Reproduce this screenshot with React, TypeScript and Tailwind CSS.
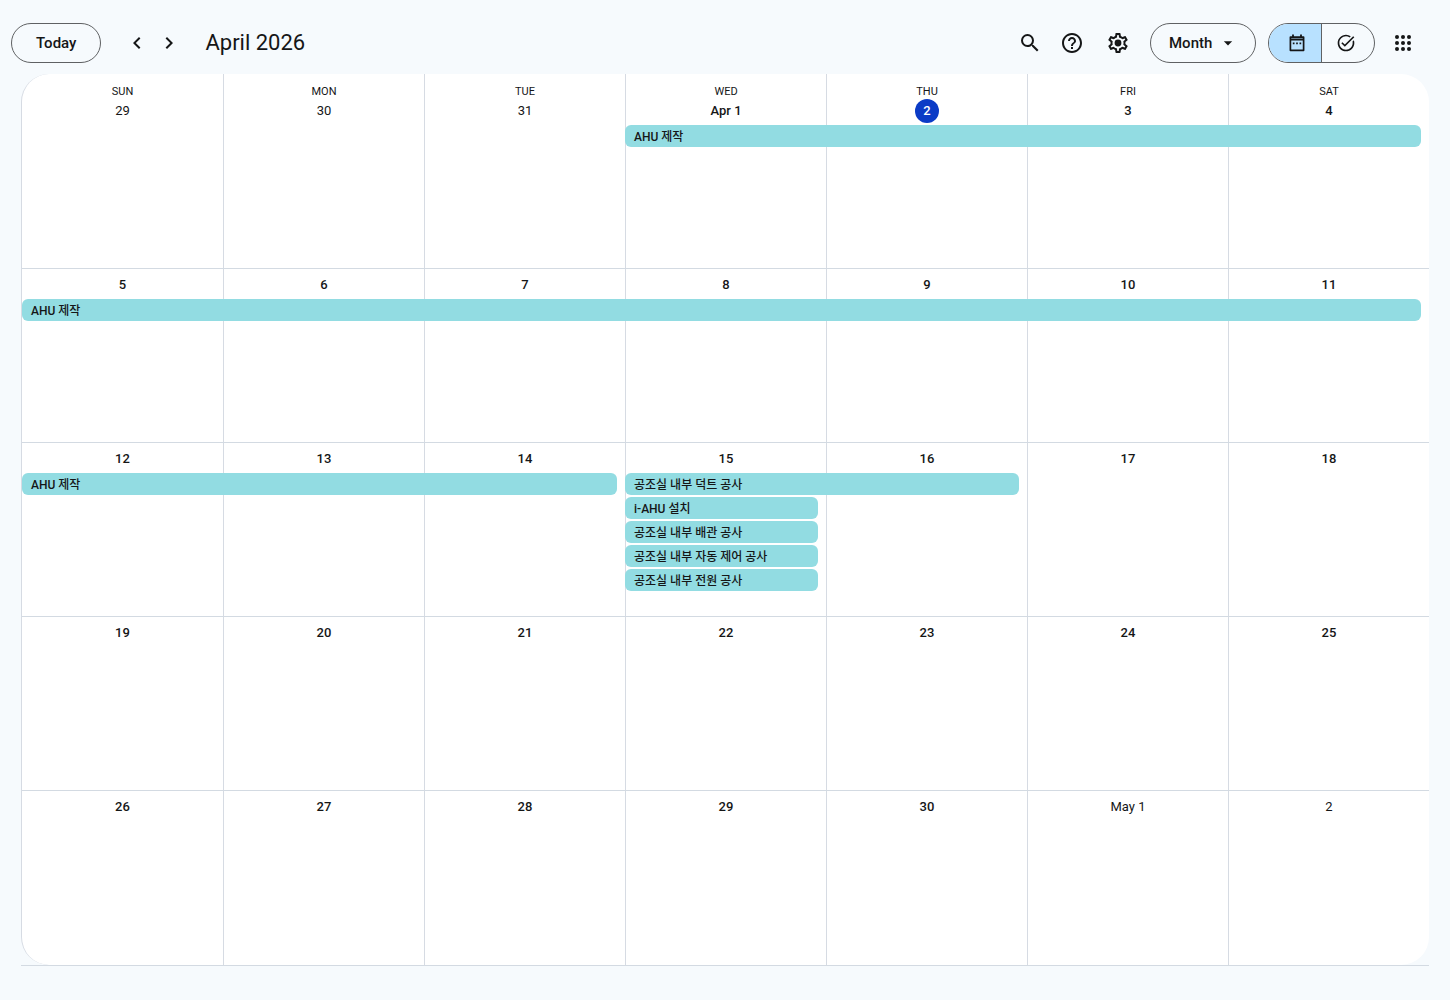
import { useState } from 'react'
import {
  MdArrowDropDown,
  MdChevronLeft,
  MdChevronRight,
  MdHelpOutline,
  MdSearch,
  MdTaskAlt,
} from 'react-icons/md'

type CalendarEvent = {
  title: string
  place: string
}

type Week = {
  days: string[]
  events: CalendarEvent[]
}

const WEEKDAYS = ['SUN', 'MON', 'TUE', 'WED', 'THU', 'FRI', 'SAT']

const COLUMNS = [
  'col-start-1',
  'col-start-2',
  'col-start-3',
  'col-start-4',
  'col-start-5',
  'col-start-6',
  'col-start-7',
]

const WEEKS: Week[] = [
  {
    days: ['29', '30', '31', 'Apr 1', '2', '3', '4'],
    events: [{ title: 'AHU 제작', place: 'col-start-4 col-end-8 row-start-2' }],
  },
  {
    days: ['5', '6', '7', '8', '9', '10', '11'],
    events: [{ title: 'AHU 제작', place: 'col-start-1 col-end-8 row-start-2' }],
  },
  {
    days: ['12', '13', '14', '15', '16', '17', '18'],
    events: [
      { title: 'AHU 제작', place: 'col-start-1 col-end-4 row-start-2' },
      { title: '공조실 내부 덕트 공사', place: 'col-start-4 col-end-6 row-start-2' },
      { title: 'i-AHU 설치', place: 'col-start-4 row-start-3' },
      { title: '공조실 내부 배관 공사', place: 'col-start-4 row-start-4' },
      { title: '공조실 내부 자동 제어 공사', place: 'col-start-4 row-start-5' },
      { title: '공조실 내부 전원 공사', place: 'col-start-4 row-start-6' },
    ],
  },
  { days: ['19', '20', '21', '22', '23', '24', '25'], events: [] },
  { days: ['26', '27', '28', '29', '30', 'May 1', '2'], events: [] },
]

// days before April in the first row and after it in the last one
function isOutside(row: number, column: number) {
  return (row === 0 && column < 3) || (row === WEEKS.length - 1 && column > 4)
}

function SettingsIcon() {
  return (
    <svg viewBox="0 0 24 24" className="size-6" fill="currentColor" aria-hidden="true">
      <path d="M19.43 12.98c.04-.32.07-.64.07-.98 0-.34-.03-.66-.07-.98l2.11-1.65c.19-.15.24-.42.12-.64l-2-3.46a.5.5 0 0 0-.61-.22l-2.49 1c-.52-.4-1.08-.73-1.69-.98l-.38-2.65A.488.488 0 0 0 14 2h-4c-.25 0-.46.18-.49.42l-.38 2.65c-.61.25-1.17.59-1.69.98l-2.49-1a.5.5 0 0 0-.61.22l-2 3.46c-.13.22-.07.49.12.64l2.11 1.65c-.04.32-.07.65-.07.98 0 .33.03.66.07.98l-2.11 1.65c-.19.15-.24.42-.12.64l2 3.46c.12.22.38.3.61.22l2.49-1c.52.4 1.08.73 1.69.98l.38 2.65c.03.24.24.42.49.42h4c.25 0 .46-.18.49-.42l.38-2.65c.61-.25 1.17-.59 1.69-.98l2.49 1c.23.09.49 0 .61-.22l2-3.46c.12-.22.07-.49-.12-.64l-2.11-1.65zm-1.98-1.71c.04.31.05.52.05.73s-.02.43-.05.73l-.14 1.13.89.7 1.08.84-.7 1.21-1.27-.51-1.04-.42-.9.68c-.43.32-.84.56-1.25.73l-1.06.43-.16 1.13-.2 1.35h-1.4l-.19-1.35-.16-1.13-1.06-.43c-.43-.18-.83-.41-1.23-.71l-.91-.7-1.06.43-1.27.51-.7-1.21 1.08-.84.89-.7-.14-1.13c-.03-.31-.05-.54-.05-.74s.02-.43.05-.73l.14-1.13-.89-.7-1.08-.84.7-1.21 1.27.51 1.04.42.9-.68c.43-.32.84-.56 1.25-.73l1.06-.43.16-1.13.2-1.35h1.39l.19 1.35.16 1.13 1.06.43c.43.18.83.41 1.23.71l.91.7 1.06-.43 1.27-.51.7 1.21-1.07.85-.89.7.14 1.13z" />
      <circle cx="12" cy="12" r="3.4" />
    </svg>
  )
}

function CalendarIcon() {
  return (
    <svg viewBox="0 0 20 20" className="size-5" fill="none" stroke="currentColor" aria-hidden="true">
      <path d="M3.4 4.2h13.2v13.1H3.4z" strokeWidth="1.7" strokeLinejoin="round" />
      <path d="M3.4 6.4h13.2" strokeWidth="2" />
      <path d="M6 1.6v2.6M14 1.6v2.6" strokeWidth="1.8" />
      <path d="M5.8 10.3h1.7M9.15 10.3h1.7M12.5 10.3h1.7" strokeWidth="1.7" />
    </svg>
  )
}

function AppsIcon() {
  return (
    <svg viewBox="0 0 24 24" className="size-6" fill="currentColor" aria-hidden="true">
      {[6, 12, 18].map((y) => [6, 12, 18].map((x) => <circle key={`${x}-${y}`} cx={x} cy={y} r="2" />))}
    </svg>
  )
}

function IconButton({
  label,
  className = 'size-10',
  children,
}: {
  label: string
  className?: string
  children: React.ReactNode
}) {
  return (
    <button
      aria-label={label}
      className={`flex items-center justify-center rounded-full hover:bg-black/5 ${className}`}
    >
      {children}
    </button>
  )
}

function Toolbar() {
  const [view, setView] = useState('Month')
  const [mode, setMode] = useState('calendar')

  return (
    <header className="flex items-center pt-[23px] pr-[27px] pb-[11px] pl-[11px]">
      <button className="h-10 rounded-full border border-[#5f6163] px-6 text-[15px] font-medium hover:bg-black/5">
        Today
      </button>
      <div className="ml-5 flex">
        <IconButton label="Previous month" className="size-8">
          <MdChevronLeft className="size-6" />
        </IconButton>
        <IconButton label="Next month" className="size-8">
          <MdChevronRight className="size-6" />
        </IconButton>
      </div>
      <h1 className="ml-5 text-[22px] leading-7">April 2026</h1>

      <div className="ml-auto flex items-center">
        <IconButton label="Search">
          <MdSearch className="size-6" />
        </IconButton>
        <IconButton label="Support" className="ml-[2px] size-10">
          <MdHelpOutline className="size-6" />
        </IconButton>
        <IconButton label="Settings menu" className="ml-[6px] size-10">
          <SettingsIcon />
        </IconButton>
        <div className="relative ml-3">
          <select
            aria-label="View"
            value={view}
            onChange={(e) => setView(e.target.value)}
            className="h-10 w-[106px] appearance-none rounded-full border border-[#5f6163] pl-[18px] text-[15px] font-medium"
          >
            <option>Day</option>
            <option>Week</option>
            <option>Month</option>
            <option>Year</option>
          </select>
          <MdArrowDropDown className="pointer-events-none absolute top-[10px] right-[18px] size-5" />
        </div>
        <div className="ml-3 flex h-10 w-[107px] overflow-hidden rounded-full border border-[#5f6163]">
          <button
            aria-label="Calendar"
            aria-pressed={mode === 'calendar'}
            onClick={() => setMode('calendar')}
            className={`flex flex-1 items-center justify-center border-r border-[#5f6163] pl-1 ${mode === 'calendar' ? 'bg-[#b8e1ff]' : ''}`}
          >
            <CalendarIcon />
          </button>
          <button
            aria-label="Tasks"
            aria-pressed={mode === 'tasks'}
            onClick={() => setMode('tasks')}
            className={`flex flex-1 items-center justify-center pr-1 ${mode === 'tasks' ? 'bg-[#b8e1ff]' : ''}`}
          >
            <MdTaskAlt className="size-5" />
          </button>
        </div>
        <IconButton label="Google apps" className="ml-2 size-10">
          <AppsIcon />
        </IconButton>
      </div>
    </header>
  )
}

function DayCell({
  label,
  column,
  today,
  outside,
}: {
  label: string
  column: number
  today: boolean
  outside: boolean
}) {
  return (
    <div
      role="gridcell"
      className={`${COLUMNS[column]} row-start-1 row-end-8 flex justify-center pt-1 ${
        column > 0 ? 'border-l border-[#d6dbe3]' : ''
      }`}
    >
      <span
        className={`flex h-6 min-w-6 items-center justify-center text-[13px] ${
          outside ? 'font-normal' : 'font-medium'
        } ${today ? 'rounded-full bg-[#0b3bc6] text-white' : ''}`}
      >
        {label}
      </span>
    </div>
  )
}

function WeekRow({ week, row }: { week: Week; row: number }) {
  return (
    <div
      role="row"
      className={`grid grid-cols-7 grid-rows-[28px_repeat(5,22px)_1fr] gap-y-[2px] ${
        row === WEEKS.length - 1 ? '' : 'border-b border-[#d3dae2]'
      }`}
    >
      {week.days.map((day, i) => (
        <DayCell
          key={day}
          label={day}
          column={i}
          today={row === 0 && day === '2'}
          outside={isOutside(row, i)}
        />
      ))}
      {week.events.map((event) => (
        <button
          key={event.title}
          className={`${event.place} z-10 mr-2 truncate rounded-md bg-[#92dce2] pt-[2px] pl-[9px] text-left text-xs font-medium`}
        >
          {event.title}
        </button>
      ))}
    </div>
  )
}

export default function App() {
  return (
    <div className="flex min-h-screen flex-col bg-[#f6fafd] font-['Roboto','Noto_Sans_CJK_KR',sans-serif] text-[#151617]">
      <Toolbar />
      <main className="mr-[21px] mb-[34px] ml-[21px] flex flex-1 flex-col border-b border-[#d3dae2]">
        <div
          role="grid"
          aria-label="April 2026"
          className="flex flex-1 flex-col overflow-hidden rounded-[28px] border-l border-[#d6dbe3] bg-white"
        >
          <div role="row" className="grid h-[21px] grid-cols-7">
            {WEEKDAYS.map((name, i) => (
              <div
                key={name}
                role="columnheader"
                className={`h-[21px] pt-[10px] text-center text-[11px] leading-4 ${
                  i > 0 ? 'border-l border-[#d6dbe3]' : ''
                }`}
              >
                {name}
              </div>
            ))}
          </div>
          <div className="grid flex-1 auto-rows-fr">
            {WEEKS.map((week, i) => (
              <WeekRow key={week.days[0]} week={week} row={i} />
            ))}
          </div>
        </div>
      </main>
    </div>
  )
}
